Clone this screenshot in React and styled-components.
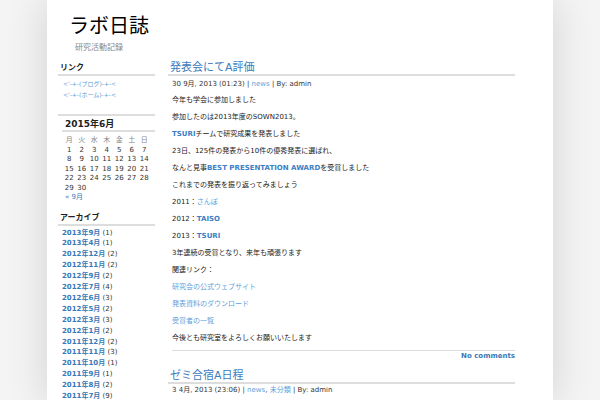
import React from 'react'
import styled, { createGlobalStyle } from 'styled-components'

const GlobalStyle = createGlobalStyle`
  body {
    margin: 0;
    background: #f4f4f4;
    font-family: "DejaVu Sans", "Noto Sans CJK JP", sans-serif;
    color: #222;
  }
`

const Page = styled.div`
  width: 506px;
  min-height: 400px;
  margin: 0 auto;
  background: #fff;
  box-shadow: 0 0 40px rgba(0, 0, 0, 0.14);
`

const Header = styled.header`
  padding: 14px 0 0 22px;
`

const SiteTitle = styled.h1`
  margin: 0;
  font-size: 20px;
  line-height: 24px;
  font-weight: normal;
  color: #000;
`

const Tagline = styled.div`
  margin: 5px 0 0 6px;
  font-size: 8px;
  line-height: 10px;
  color: #888;
`

const Columns = styled.div`
  display: grid;
  grid-template-columns: 97px 347px;
  gap: 13px;
  padding-left: 11px;
  margin-top: 8px;
`

const Sidebar = styled.aside`
  display: flex;
  flex-direction: column;
`

const Widget = styled.section`
  margin-bottom: ${(p) => p.$gap || 0}px;
`

const WidgetTitle = styled.h2`
  margin: 0;
  padding: 0 2px;
  font-size: 8px;
  line-height: 13px;
  font-weight: bold;
  color: #222;
  border-bottom: 2px solid #ddd;
  height: ${(p) => (p.$empty ? '0' : 'auto')};
`

const LinkList = styled.ul`
  list-style: none;
  margin: 0;
  padding: ${(p) => p.$top || 0}px 0 0 ${(p) => p.$indent || 0}px;
  font-size: ${(p) => p.$size || 7}px;
  line-height: ${(p) => p.$lh || 11}px;
`

const SideLink = styled.a`
  color: #5b9bd5;
  text-decoration: none;
`

const ArchiveLink = styled.a`
  color: #3a78b5;
  font-weight: bold;
  text-decoration: none;
`

const Count = styled.span`
  color: #333;
`

const Caption = styled.div`
  margin: 2px 0 0 4px;
  padding-left: 3px;
  font-size: 9px;
  line-height: 12px;
  font-weight: bold;
  border-bottom: 2px solid #ddd;
`

const CalGrid = styled.div`
  display: grid;
  grid-template-columns: repeat(7, 12.5px);
  margin: 4px 0 0 5px;
  font-size: 7px;
  line-height: 9.5px;
  text-align: center;
  color: #333;
`

const DayHead = styled.span`
  color: #888;
`

const CalNav = styled.a`
  display: block;
  margin-left: 7px;
  font-size: 7px;
  line-height: 9.5px;
  color: #3a78b5;
  text-decoration: none;
`

const Main = styled.main`
  display: flex;
  flex-direction: column;
`

const PostTitle = styled.h2`
  margin: ${(p) => p.$top || 0}px 0 0;
  padding: 0 2px;
  font-size: 11px;
  line-height: 13px;
  font-weight: normal;
  border-bottom: 2px solid #ddd;

  a {
    color: #3c7bbd;
    text-decoration: none;
  }
`

const Meta = styled.div`
  margin: ${(p) => p.$top || 0}px 0 0 4px;
  font-size: 7px;
  line-height: 10px;
  color: #333;

  a {
    color: #5ea1db;
    text-decoration: none;
  }
`

const Entry = styled.div`
  margin: 6px 0 0 4px;
  font-size: 7px;
  line-height: 10px;
`

const P = styled.p`
  margin: 0 0 7px;
  white-space: nowrap;
`

const Strong = styled.a`
  color: #3c80c4;
  font-weight: bold;
  text-decoration: none;
`

const Light = styled.a`
  color: #5ea1db;
  text-decoration: none;
`

const Footer = styled.div`
  margin-left: 4px;
  border-top: 1px solid #ddd;
  text-align: right;
  font-size: 7px;
  line-height: 10px;
  font-weight: bold;

  a {
    color: #3a78b5;
    text-decoration: none;
  }
`

const archives = [
  ['2013年9月', 1], ['2013年4月', 1], ['2012年12月', 2], ['2012年11月', 2],
  ['2012年9月', 2], ['2012年7月', 4], ['2012年6月', 3], ['2012年5月', 2],
  ['2012年3月', 3], ['2012年1月', 2], ['2011年12月', 2], ['2011年11月', 3],
  ['2011年10月', 1], ['2011年9月', 1], ['2011年8月', 2], ['2011年7月', 9],
]

const weekdays = ['月', '火', '水', '木', '金', '土', '日']
const days = Array.from({ length: 30 }, (_, i) => i + 1)

export default function App() {
  return (
    <>
      <GlobalStyle />
      <Page>
        <Header>
          <SiteTitle>ラボ日誌</SiteTitle>
          <Tagline>研究活動記録</Tagline>
        </Header>
        <Columns>
          <Sidebar>
            <Widget $gap={14}>
              <WidgetTitle>リンク</WidgetTitle>
              <LinkList $top={2} $indent={5} $size={6} $lh={11}>
                <li><SideLink href="#">{"<'-+-(ブログ)-+-<"}</SideLink></li>
                <li><SideLink href="#">{"<'-+-(ホーム)-+-<"}</SideLink></li>
              </LinkList>
            </Widget>
            <Widget $gap={8}>
              <WidgetTitle $empty />
              <Caption>2015年6月</Caption>
              <CalGrid>
                {weekdays.map((d) => <DayHead key={d}>{d}</DayHead>)}
                {days.map((d) => <span key={d}>{d}</span>)}
              </CalGrid>
              <CalNav href="#">« 9月</CalNav>
            </Widget>
            <Widget>
              <WidgetTitle>アーカイブ</WidgetTitle>
              <LinkList $top={2} $indent={4} $lh={10.9}>
                {archives.map(([m, n]) => (
                  <li key={m}>
                    <ArchiveLink href="#">{m}</ArchiveLink> <Count>({n})</Count>
                  </li>
                ))}
              </LinkList>
            </Widget>
          </Sidebar>

          <Main>
            <PostTitle><a href="#">発表会にてA評価</a></PostTitle>
            <Meta $top={3}>30 9月, 2013 (01:23) | <a href="#">news</a> | By: admin</Meta>
            <Entry>
              <P>今年も学会に参加しました</P>
              <P>参加したのは2013年度のSOWN2013。</P>
              <P><Strong href="#">TSURI</Strong>チームで研究成果を発表しました</P>
              <P>23日、125件の発表から10件の優秀発表に選ばれ、</P>
              <P>なんと見事<Strong href="#">BEST PRESENTATION AWARD</Strong>を受賞しました</P>
              <P>これまでの発表を振り返ってみましょう</P>
              <P>2011：<Light href="#">さんぽ</Light></P>
              <P>2012：<Strong href="#">TAISO</Strong></P>
              <P>2013：<Strong href="#">TSURI</Strong></P>
              <P>3年連続の受賞となり、来年も頑張ります</P>
              <P>関連リンク：</P>
              <P><Light href="#">研究会の公式ウェブサイト</Light></P>
              <P><Light href="#">発表資料のダウンロード</Light></P>
              <P><Light href="#">受賞者の一覧</Light></P>
              <P>今後とも研究室をよろしくお願いいたします</P>
            </Entry>
            <Footer><a href="#">No comments</a></Footer>

            <PostTitle $top={8}><a href="#">ゼミ合宿A日程</a></PostTitle>
            <Meta $top={1}>3 4月, 2013 (23:06) | <a href="#">news</a>, <a href="#">未分類</a> | By: admin</Meta>
          </Main>
        </Columns>
      </Page>
    </>
  )
}
